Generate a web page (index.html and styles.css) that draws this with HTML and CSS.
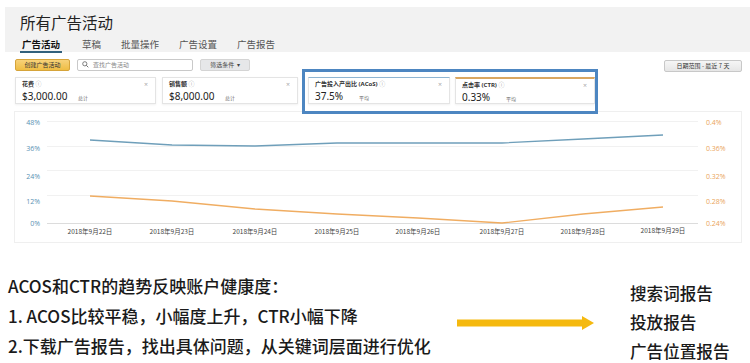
FILE: index.html
```html
<html>
<head>
  <title>所有广告活动</title>
  <link rel="stylesheet" href="styles.css">
</head>
<body>
  <div class="shot">
    <div class="header">
      <h1>所有广告活动</h1>
      <div class="tabs">
        <span class="tab active">广告活动</span>
        <span class="tab">草稿</span>
        <span class="tab">批量操作</span>
        <span class="tab">广告设置</span>
        <span class="tab">广告报告</span>
      </div>
    </div>

    <div class="toolbar">
      <button class="btn-create">创建广告活动</button>
      <div class="search">
        <svg width="7" height="7" viewBox="0 0 10 10"><circle cx="4" cy="4" r="3" fill="none" stroke="#666" stroke-width="1.2"/><line x1="6.2" y1="6.2" x2="9" y2="9" stroke="#666" stroke-width="1.3"/></svg>
        <span>查找广告活动</span>
      </div>
      <button class="btn-filter">筛选条件 &nbsp;▾</button>
      <div class="spacer"></div>
      <button class="btn-date">日期范围 - 最近 7 天</button>
    </div>

    <div class="cards">
      <div class="card c1">
        <div class="card-top"><span class="label">花费 <i>ⓘ</i></span><span class="x">×</span></div>
        <div class="card-val"><span class="num">$3,000.00</span><span class="unit">总计</span></div>
      </div>
      <div class="card c2">
        <div class="card-top"><span class="label">销售额 <i>ⓘ</i></span><span class="x">×</span></div>
        <div class="card-val"><span class="num">$8,000.00</span><span class="unit">总计</span></div>
      </div>
      <div class="card c3">
        <div class="card-top"><span class="label">广告投入产出比 (ACoS) <i>ⓘ</i></span><span class="x">×</span></div>
        <div class="card-val"><span class="num">37.5%</span><span class="unit">平均</span></div>
      </div>
      <div class="card c4">
        <div class="card-top"><span class="label">点击率 (CTR) <i>ⓘ</i></span><span class="x">×</span></div>
        <div class="card-val"><span class="num">0.33%</span><span class="unit">平均</span></div>
      </div>
      <div class="highlight"></div>
    </div>

    <div class="chart">
      <svg width="726" height="130" viewBox="15 111 726 130">
        <g stroke="#f1f1f1" stroke-width="1">
          <line x1="47" y1="120.5" x2="698" y2="120.5"/>
          <line x1="47" y1="145.5" x2="698" y2="145.5"/>
          <line x1="47" y1="169.5" x2="698" y2="169.5"/>
          <line x1="47" y1="194.5" x2="698" y2="194.5"/>
        </g>
        <line x1="47" y1="222.5" x2="698" y2="222.5" stroke="#dcdcdc"/>
        <g class="axis-l">
          <text x="40" y="124">48%</text>
          <text x="40" y="150">36%</text>
          <text x="40" y="178">24%</text>
          <text x="40" y="203">12%</text>
          <text x="40" y="225">0%</text>
        </g>
        <g class="axis-r">
          <text x="706" y="124">0.4%</text>
          <text x="706" y="150">0.36%</text>
          <text x="706" y="178">0.32%</text>
          <text x="706" y="203">0.28%</text>
          <text x="706" y="225">0.24%</text>
        </g>
        <g class="dates">
          <text x="90" y="233">2018年9月22日</text>
          <text x="172" y="233">2018年9月23日</text>
          <text x="255" y="233">2018年9月24日</text>
          <text x="337" y="233">2018年9月25日</text>
          <text x="418" y="233">2018年9月26日</text>
          <text x="502" y="233">2018年9月27日</text>
          <text x="583" y="233">2018年9月28日</text>
          <text x="663" y="232">2018年9月29日</text>
        </g>
        <polyline fill="none" stroke="#6f9fba" stroke-width="1.3" points="90,139 172,144 255,145 337,142 418,142 502,142 583,138 663,134"/>
        <polyline fill="none" stroke="#f0ad62" stroke-width="1.3" points="90,195 172,200 255,208 337,213 418,217 502,222 583,213 663,206"/>
      </svg>
    </div>

    <div class="notes">
      <div class="summary">
        <p>ACOS和CTR的趋势反映账户健康度：</p>
        <p>1. ACOS比较平稳，小幅度上升，CTR小幅下降</p>
        <p>2.下载广告报告，找出具体问题，从关键词层面进行优化</p>
      </div>
      <svg class="arrow" width="137" height="16" viewBox="0 0 137 16">
        <rect x="0" y="4.5" width="126" height="7" fill="#f5b90f"/>
        <polygon points="125,1 137,8 125,15" fill="#f5b90f"/>
      </svg>
      <ul class="reports">
        <li>搜索词报告</li>
        <li>投放报告</li>
        <li>广告位置报告</li>
      </ul>
    </div>
  </div>
</body>
</html>
```

FILE: styles.css
```css
body {
  margin: 0;
  background-color: #fff;
  font-family: "Noto Sans", "Noto Sans CJK SC", sans-serif;
  color: #333;
}

.shot {
  width: 750px;
  height: 363px;
  overflow: hidden;
}

.header {
  margin: 7px 0 0 5px;
  height: 45px;
  background-color: #f2f2f2;
  box-sizing: border-box;
  padding: 5px 0 0 15px;
}

h1 {
  margin: 0;
  font-size: 15.5px;
  font-weight: normal;
  line-height: 22px;
  color: #222;
}

.tabs {
  display: flex;
  gap: 20px;
  margin: 5px 0 0 2px;
}

.tab {
  font-size: 9.5px;
  line-height: 12px;
  color: #555;
  padding-bottom: 1px;
}

.tab.active {
  font-weight: bold;
  color: #111;
  border-bottom: 2px solid #31607c;
  margin-left: -2px;
  padding: 0 2px 0;
}

.toolbar {
  display: flex;
  align-items: center;
  margin: 6px 0 0 15px;
  padding-right: 8px;
  height: 13px;
}

.toolbar button {
  font-family: "Noto Sans CJK SC", sans-serif;
  font-size: 6px;
  height: 12px;
  padding: 0;
  border-radius: 2px;
  line-height: 10px;
}

.btn-create {
  width: 55px;
  background: linear-gradient(#f7d27a, #efbd43);
  border: 1px solid #d6a43a;
  color: #333;
}

.search {
  display: flex;
  align-items: center;
  gap: 4px;
  width: 116px;
  height: 12px;
  box-sizing: border-box;
  margin-left: 7px;
  padding-left: 4px;
  border: 1px solid #c9c9c9;
  border-radius: 2px;
  font-size: 6px;
  color: #888;
}

.btn-filter {
  width: 50px;
  margin-left: 7px;
  background-color: #e6e7e9;
  border: 1px solid #d4d4d4;
  color: #444;
}

.spacer {
  flex: 1;
}

.btn-date {
  width: 78px;
  margin-top: 3px;
  background: linear-gradient(#f6f6f6, #e6e6e6);
  border: 1px solid #c8c8c8;
  color: #333;
}

.cards {
  position: relative;
  display: flex;
  margin: 6px 0 0 15px;
}

.card {
  height: 27px;
  box-sizing: border-box;
  border: 1px solid #e4e4e4;
  box-shadow: 0 1px 2px rgba(0, 0, 0, 0.06);
  padding: 2px 7px 0 6px;
  background-color: #fff;
}

.c1 { width: 141px; }
.c2 { width: 136px; margin-left: 6px; }
.c3 { width: 142px; margin-left: 10px; border-top: 1px solid #8fb5d2; }
.c4 { width: 140px; margin-left: 5px; border-top: 2px solid #d9a660; }

.card-top {
  display: flex;
  justify-content: space-between;
  font-size: 6px;
  line-height: 9px;
  font-weight: bold;
  color: #333;
}

.card-top i {
  font-style: normal;
  font-weight: normal;
  color: #aaa;
}

.card-top .x {
  font-weight: normal;
  color: #aaa;
  font-size: 7px;
}

.card-val {
  display: flex;
  align-items: baseline;
  line-height: 14px;
}

.num {
  font-size: 10px;
  color: #222;
  width: 56px;
}

.c3 .num, .c4 .num {
  width: 44px;
}

.unit {
  font-size: 5px;
  color: #666;
}

.highlight {
  position: absolute;
  left: 287px;
  top: -8px;
  width: 296px;
  height: 45px;
  box-sizing: border-box;
  border: 3px solid #4d86c1;
}

.chart {
  margin: 7px 0 0 14px;
  width: 728px;
  height: 132px;
  box-sizing: border-box;
  border: 1px solid #efefef;
}

.chart svg {
  display: block;
}

.axis-l text {
  font-family: "Open Sans", sans-serif;
  font-size: 7px;
  fill: #5b92b4;
  text-anchor: end;
}

.axis-r text {
  font-family: "Open Sans", sans-serif;
  font-size: 7px;
  fill: #eaa55a;
}

.dates text {
  font-family: "Noto Sans CJK SC", sans-serif;
  font-size: 6.5px;
  fill: #444;
  text-anchor: middle;
}

.notes {
  display: flex;
  margin-top: 20px;
}

.summary {
  width: 457px;
  box-sizing: border-box;
  padding: 8px 0 0 8px;
  font-family: "Noto Sans CJK SC", sans-serif;
  font-size: 17px;
  font-weight: 500;
  color: #1a1a1a;
}

.summary p {
  margin: 0;
  line-height: 30px;
  white-space: nowrap;
}

.arrow {
  flex-shrink: 0;
  margin-top: 52px;
}

.reports {
  list-style: none;
  margin: 20px 0 0 36px;
  padding: 0;
  font-family: "Noto Sans CJK SC", sans-serif;
  font-size: 16.6px;
  font-weight: 500;
  color: #1a1a1a;
}

.reports li {
  line-height: 20px;
  margin-bottom: 9px;
  white-space: nowrap;
}
```
